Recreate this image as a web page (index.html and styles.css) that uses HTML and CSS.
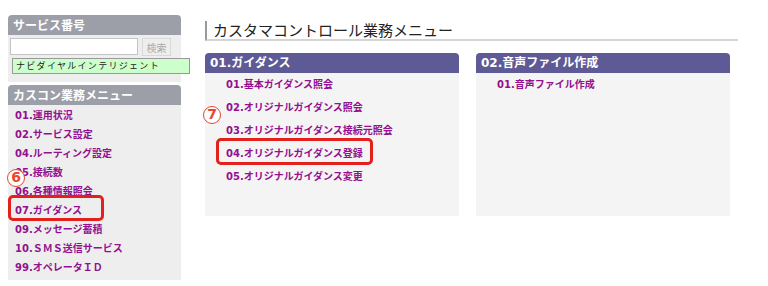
FILE: index.html
```html
<!DOCTYPE html>
<html lang="ja">
<head>
  <meta charset="UTF-8">
  <title>カスタマコントロール業務メニュー</title>
  <link rel="stylesheet" href="styles.css">
</head>
<body>
  <div class="page">
    <div class="side">
      <div class="panel">
        <div class="panel-head">サービス番号</div>
        <div class="search">
          <div class="search-row">
            <input class="svc-input" type="text">
            <button class="search-btn">検索</button>
          </div>
          <div class="svc-name">ナビダイヤルインテリジェント</div>
        </div>
      </div>

      <div class="panel menu-panel">
        <div class="panel-head">カスコン業務メニュー</div>
        <ul class="side-menu">
          <li><a href="#">01.運用状況</a></li>
          <li><a href="#">02.サービス設定</a></li>
          <li><a href="#">04.ルーティング設定</a></li>
          <li><a href="#">05.接続数</a></li>
          <li><a href="#">06.各種情報照会</a></li>
          <li><a href="#">07.ガイダンス</a></li>
          <li><a href="#">09.メッセージ蓄積</a></li>
          <li><a href="#">10.ＳＭＳ送信サービス</a></li>
          <li><a href="#">99.オペレータＩＤ</a></li>
        </ul>
        <span class="num num-6">6</span>
        <span class="mark mark-side"></span>
      </div>
    </div>

    <div class="main">
      <h1 class="title">カスタマコントロール業務メニュー</h1>
      <div class="boxes">
        <div class="box">
          <div class="box-head">01.ガイダンス</div>
          <ul class="box-list">
            <li><a href="#">01.基本ガイダンス照会</a></li>
            <li><a href="#">02.オリジナルガイダンス照会</a></li>
            <li><a href="#">03.オリジナルガイダンス接続元照会</a></li>
            <li><a href="#">04.オリジナルガイダンス登録</a></li>
            <li><a href="#">05.オリジナルガイダンス変更</a></li>
          </ul>
          <span class="num num-7">7</span>
          <span class="mark mark-main"></span>
        </div>
        <div class="box">
          <div class="box-head">02.音声ファイル作成</div>
          <ul class="box-list">
            <li><a href="#">01.音声ファイル作成</a></li>
          </ul>
        </div>
      </div>
    </div>
  </div>
</body>
</html>
```

FILE: styles.css
```css
body {
  margin: 0;
  background: #fff;
  font-family: "DejaVu Sans", "Noto Sans CJK JP", sans-serif;
  color: #222;
}
.page {
  display: flex;
  align-items: flex-start;
}

/* left column */
.side {
  width: 173px;
  margin-left: 8px;
  padding-top: 15px;
}
.panel-head {
  background: #9c9ea8;
  color: #fff;
  font-weight: bold;
  font-size: 12px;
  height: 20px;
  line-height: 20px;
  padding-left: 5px;
  border-radius: 4px 4px 0 0;
  font-family: "Noto Sans CJK JP", sans-serif;
}
.search {
  background: #eee;
  padding: 3px 0 8px 2px;
}
.search-row {
  display: flex;
  gap: 4px;
  height: 18px;
}
.svc-input {
  width: 128px;
  height: 17px;
  box-sizing: border-box;
  border: 1px solid #c4c4c4;
  background: #fff;
  margin: 0;
  padding: 0;
}
.search-btn {
  width: 29px;
  height: 18px;
  padding: 0;
  font-size: 10px;
  color: #aaa;
  background: #eee;
  border: 1px solid #d8d8d8;
  font-family: "Noto Sans CJK JP", sans-serif;
}
.svc-name {
  margin: 2px 0 0 2px;
  width: 178px;
  height: 16px;
  box-sizing: border-box;
  border: 1px solid #999;
  background: #ccffcc;
  font-size: 9px;
  line-height: 14px;
  letter-spacing: 1.3px;
  padding-left: 3px;
  position: relative;
  font-family: "Noto Sans CJK JP", sans-serif;
}
.menu-panel {
  margin-top: 3px;
  position: relative;
}
.side-menu {
  list-style: none;
  margin: 0;
  padding: 0 0 4px 7px;
  background: #eee;
}
.side-menu li {
  line-height: 18px;
  height: 19px;
}
a {
  color: #93108f;
  font-weight: bold;
  font-size: 10px;
  text-decoration: none;
}

/* main area */
.main {
  margin-left: 24px;
  padding-top: 21px;
  width: 533px;
}
.title {
  margin: 0;
  height: 18px;
  line-height: 18px;
  font-size: 15px;
  font-weight: normal;
  padding-left: 6px;
  border-left: 2px solid #9a9a9a;
  border-bottom: 2px solid #d4d4d4;
  font-family: "Noto Sans CJK JP", sans-serif;
}
.boxes {
  display: flex;
  gap: 17px;
  margin-top: 12px;
}
.box {
  width: 254px;
  position: relative;
}
.box-head {
  background: #5e5a95;
  color: #fff;
  font-weight: bold;
  font-size: 12px;
  height: 20px;
  line-height: 20px;
  padding-left: 5px;
  border-radius: 4px 4px 0 0;
}
.box-list {
  list-style: none;
  margin: 0;
  padding: 0 0 0 21px;
  height: 143px;
  box-sizing: border-box;
  background: #f4f4f4;
}
.box-list li {
  line-height: 20px;
  height: 23px;
}

/* annotations */
.mark {
  position: absolute;
  border: 3px solid #e3201b;
  border-radius: 5px;
  box-sizing: border-box;
}
.mark-side {
  left: 0;
  top: 110px;
  width: 96px;
  height: 26px;
}
.mark-main {
  left: 11px;
  top: 85px;
  width: 157px;
  height: 27px;
}
.num {
  position: absolute;
  width: 18px;
  height: 18px;
  box-sizing: border-box;
  border: 1.5px solid #e8462e;
  border-radius: 50%;
  background: #fff;
  color: #e8462e;
  font-weight: bold;
  font-size: 14px;
  line-height: 15px;
  text-align: center;
}
.num-6 {
  left: -1px;
  top: 84px;
}
.num-7 {
  left: -2px;
  top: 53px;
}
```
